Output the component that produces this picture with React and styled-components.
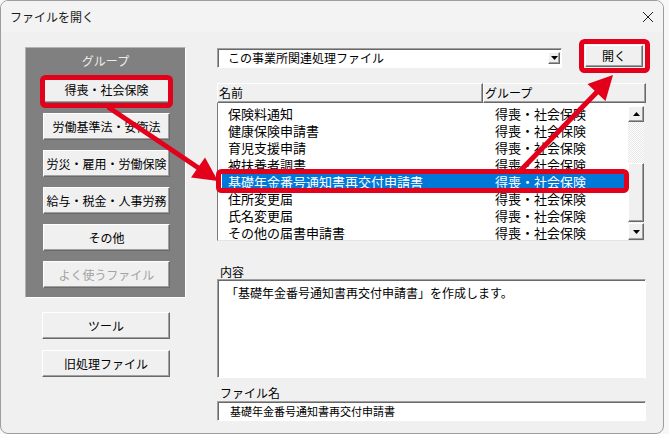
import React from "react";
import styled, { createGlobalStyle, css } from "styled-components";

const GlobalStyle = createGlobalStyle`
  html, body { margin: 0; padding: 0; background: #f7f7f7; }
  body { font-family: "Noto Sans CJK JP", "Noto Sans", sans-serif; color: #000; }
  * { box-sizing: border-box; }
`;

const raised = css`
  background: #f0f0f0;
  border: 1px solid;
  border-color: #ffffff #696969 #696969 #ffffff;
  box-shadow: inset -1px -1px 0 #a0a0a0;
`;

const sunken = css`
  background: #ffffff;
  border: 1px solid;
  border-color: #a0a0a0 #ffffff #ffffff #a0a0a0;
  box-shadow: inset 1px 1px 0 #696969;
`;

const Page = styled.div`
  position: relative;
  width: 669px;
  height: 434px;
  overflow: hidden;
`;

const Window = styled.div`
  width: 664px;
  height: 434px;
  background: #f0f0f0;
  border: 1px solid #9d9d9d;
  border-radius: 8px;
  overflow: hidden;
  display: flex;
  flex-direction: column;
`;

const TitleBar = styled.div`
  height: 31px;
  flex: none;
  display: flex;
  align-items: center;
  justify-content: space-between;
  padding: 0 9px 0 9px;
  background: #f3f3f3;
  font-size: 12px;
  line-height: 14px;
  color: #1a1a1a;
`;

const Body = styled.div`
  display: grid;
  grid-template-columns: 161px 429px;
  column-gap: 31px;
  padding: 13px 0 0 24px;
`;

const LeftCol = styled.div`
  padding-top: 2px;
  display: flex;
  flex-direction: column;
`;

const GroupPanel = styled.div`
  height: 251px;
  background: #808080;
  border: 1px solid;
  border-color: #b4b4b4 #ffffff #ffffff #b4b4b4;
  display: flex;
  flex-direction: column;
  align-items: flex-start;
  gap: 10px;
  padding: 0 0 9px 17px;
`;

const PanelLabel = styled.div`
  align-self: stretch;
  margin-left: -17px;
  text-align: center;
  color: #ececec;
  font-size: 12px;
  line-height: 16px;
  padding-top: 5px;
  margin-bottom: -3px;
`;

const Button = styled.div`
  ${raised};
  width: ${(p) => p.$w || 127}px;
  height: ${(p) => p.$h || 27}px;
  display: flex;
  align-items: center;
  justify-content: center;
  font-size: 12px;
  line-height: 14px;
  color: ${(p) => (p.$disabled ? "#a3a3a3" : "#000")};
  white-space: nowrap;
`;

const ToolGroup = styled.div`
  margin-top: 14px;
  padding-left: 17px;
  display: flex;
  flex-direction: column;
  gap: 11px;
`;

const RightCol = styled.div`
  display: flex;
  flex-direction: column;
`;

const TopRow = styled.div`
  height: 22px;
  display: flex;
  align-items: flex-start;
  gap: 23px;
`;

const Combo = styled.div`
  ${sunken};
  margin-top: 3px;
  width: 345px;
  height: 20px;
  display: flex;
  align-items: center;
  padding: 0 1px 0 10px;
  font-size: 12px;
  line-height: 14px;
`;

const ComboText = styled.span`
  flex: 1;
`;

const SmallArrow = styled.div`
  ${raised};
  width: ${(p) => p.$w || 12}px;
  height: ${(p) => p.$h || 12}px;
  display: flex;
  align-items: center;
  justify-content: center;
  flex: none;
`;

const List = styled.div`
  margin-top: 16px;
  display: flex;
  flex-direction: column;
`;

const Header = styled.div`
  height: 20px;
  display: grid;
  grid-template-columns: 266px 1fr;
`;

const HeaderCell = styled.div`
  ${raised};
  font-size: 12px;
  line-height: 16px;
  padding-left: 1px;
  display: flex;
  align-items: center;
`;

const ListBody = styled.div`
  height: 138px;
  display: flex;
  background: #fff;
  border-left: 1px solid #7a7a7a;
  border-bottom: 1px solid #e4e4e4;
  border-right: 2px solid #f0f0f0;
`;

const Rows = styled.div`
  flex: 1;
  overflow: hidden;
  padding: 2px 3px 0 4px;
`;

const Row = styled.div`
  height: 17px;
  display: grid;
  grid-template-columns: 267px 1fr;
  padding-left: 6px;
  align-items: center;
  font-size: 13px;
  line-height: 17px;
  white-space: nowrap;
  background: ${(p) => (p.$sel ? "#0078d7" : "transparent")};
  color: ${(p) => (p.$sel ? "#fff" : "#000")};
`;

const ScrollBar = styled.div`
  width: 16px;
  display: flex;
  flex-direction: column;
  padding: 3px 0 0;
`;

const Track = styled.div`
  flex: 1;
  display: flex;
  flex-direction: column;
  justify-content: flex-end;
  padding-bottom: 1px;
  background: repeating-conic-gradient(#ffffff 0 25%, #e6e6e6 0 50%) 0 0 / 2px 2px;
`;

const Thumb = styled.div`
  ${raised};
  height: 59px;
`;

const FieldLabel = styled.div`
  margin-top: ${(p) => p.$mt}px;
  font-size: 12px;
  line-height: 14px;
  padding-left: 3px;
  height: 14px;
`;

const TextArea = styled.div`
  ${sunken};
  height: 99px;
  padding: 5px 8px;
  font-size: 12px;
  line-height: 15px;
`;

const TextInput = styled.div`
  ${sunken};
  margin-top: 1px;
  height: 20px;
  display: flex;
  align-items: center;
  padding-left: 12px;
  font-size: 11px;
  line-height: 13px;
`;

const Overlay = styled.svg`
  position: absolute;
  left: 0;
  top: 0;
  pointer-events: none;
`;

const Tri = ({ up }) => (
  <svg width="7" height="4" viewBox="0 0 7 4">
    <polygon points={up ? "3.5,0 7,4 0,4" : "0,0 7,0 3.5,4"} fill="#000" />
  </svg>
);

const rows = [
  "保険料通知",
  "健康保険申請書",
  "育児支援申請",
  "被扶養者調書",
  "基礎年金番号通知書再交付申請書",
  "住所変更届",
  "氏名変更届",
  "その他の届書申請書",
];

const groups = [
  { label: "得喪・社会保険" },
  { label: "労働基準法・安衛法" },
  { label: "労災・雇用・労働保険" },
  { label: "給与・税金・人事労務" },
  { label: "その他" },
  { label: "よく使うファイル", disabled: true },
];

export default function App() {
  return (
    <Page>
      <GlobalStyle />
      <Window>
        <TitleBar>
          <span>ファイルを開く</span>
          <svg width="12" height="12" viewBox="0 0 12 12">
            <path d="M1 1 L11 11 M11 1 L1 11" stroke="#222" strokeWidth="1" />
          </svg>
        </TitleBar>
        <Body>
          <LeftCol>
            <GroupPanel>
              <PanelLabel>グループ</PanelLabel>
              {groups.map((g) => (
                <Button key={g.label} $disabled={g.disabled}>
                  {g.label}
                </Button>
              ))}
            </GroupPanel>
            <ToolGroup>
              <Button $w={128}>ツール</Button>
              <Button $w={128}>旧処理ファイル</Button>
            </ToolGroup>
          </LeftCol>
          <RightCol>
            <TopRow>
              <Combo>
                <ComboText>この事業所関連処理ファイル</ComboText>
                <SmallArrow>
                  <Tri />
                </SmallArrow>
              </Combo>
              <Button $w={58} $h={22}>
                開く
              </Button>
            </TopRow>
            <List>
              <Header>
                <HeaderCell>名前</HeaderCell>
                <HeaderCell>グループ</HeaderCell>
              </Header>
              <ListBody>
                <Rows>
                  {rows.map((r, i) => (
                    <Row key={r} $sel={i === 4}>
                      <span>{r}</span>
                      <span>得喪・社会保険</span>
                    </Row>
                  ))}
                </Rows>
                <ScrollBar>
                  <SmallArrow $w={16} $h={16}>
                    <Tri up />
                  </SmallArrow>
                  <Track>
                    <Thumb />
                  </Track>
                  <SmallArrow $w={16} $h={17}>
                    <Tri />
                  </SmallArrow>
                </ScrollBar>
              </ListBody>
            </List>
            <FieldLabel $mt={24}>内容</FieldLabel>
            <TextArea>「基礎年金番号通知書再交付申請書」を作成します。</TextArea>
            <FieldLabel $mt={8}>ファイル名</FieldLabel>
            <TextInput>基礎年金番号通知書再交付申請書</TextInput>
          </RightCol>
        </Body>
      </Window>
      <Overlay width="669" height="434" viewBox="0 0 669 434">
        <g fill="none" stroke="#e2001a" strokeWidth="5">
          <rect x="42.5" y="77.5" width="128" height="28" rx="3" />
          <rect x="581.5" y="41.5" width="66" height="29" rx="3" />
          <rect x="218.5" y="171.5" width="408" height="19" rx="3" />
        </g>
        <g stroke="#e2001a" strokeWidth="5">
          <line x1="108" y1="107" x2="200" y2="169" />
          <line x1="520" y1="171" x2="598" y2="91" />
        </g>
        <g fill="#e2001a">
          <polygon points="218,181 191,177.5 205,157.5" />
          <polygon points="613,75 605.5,101 587.5,84" />
        </g>
      </Overlay>
    </Page>
  );
}
